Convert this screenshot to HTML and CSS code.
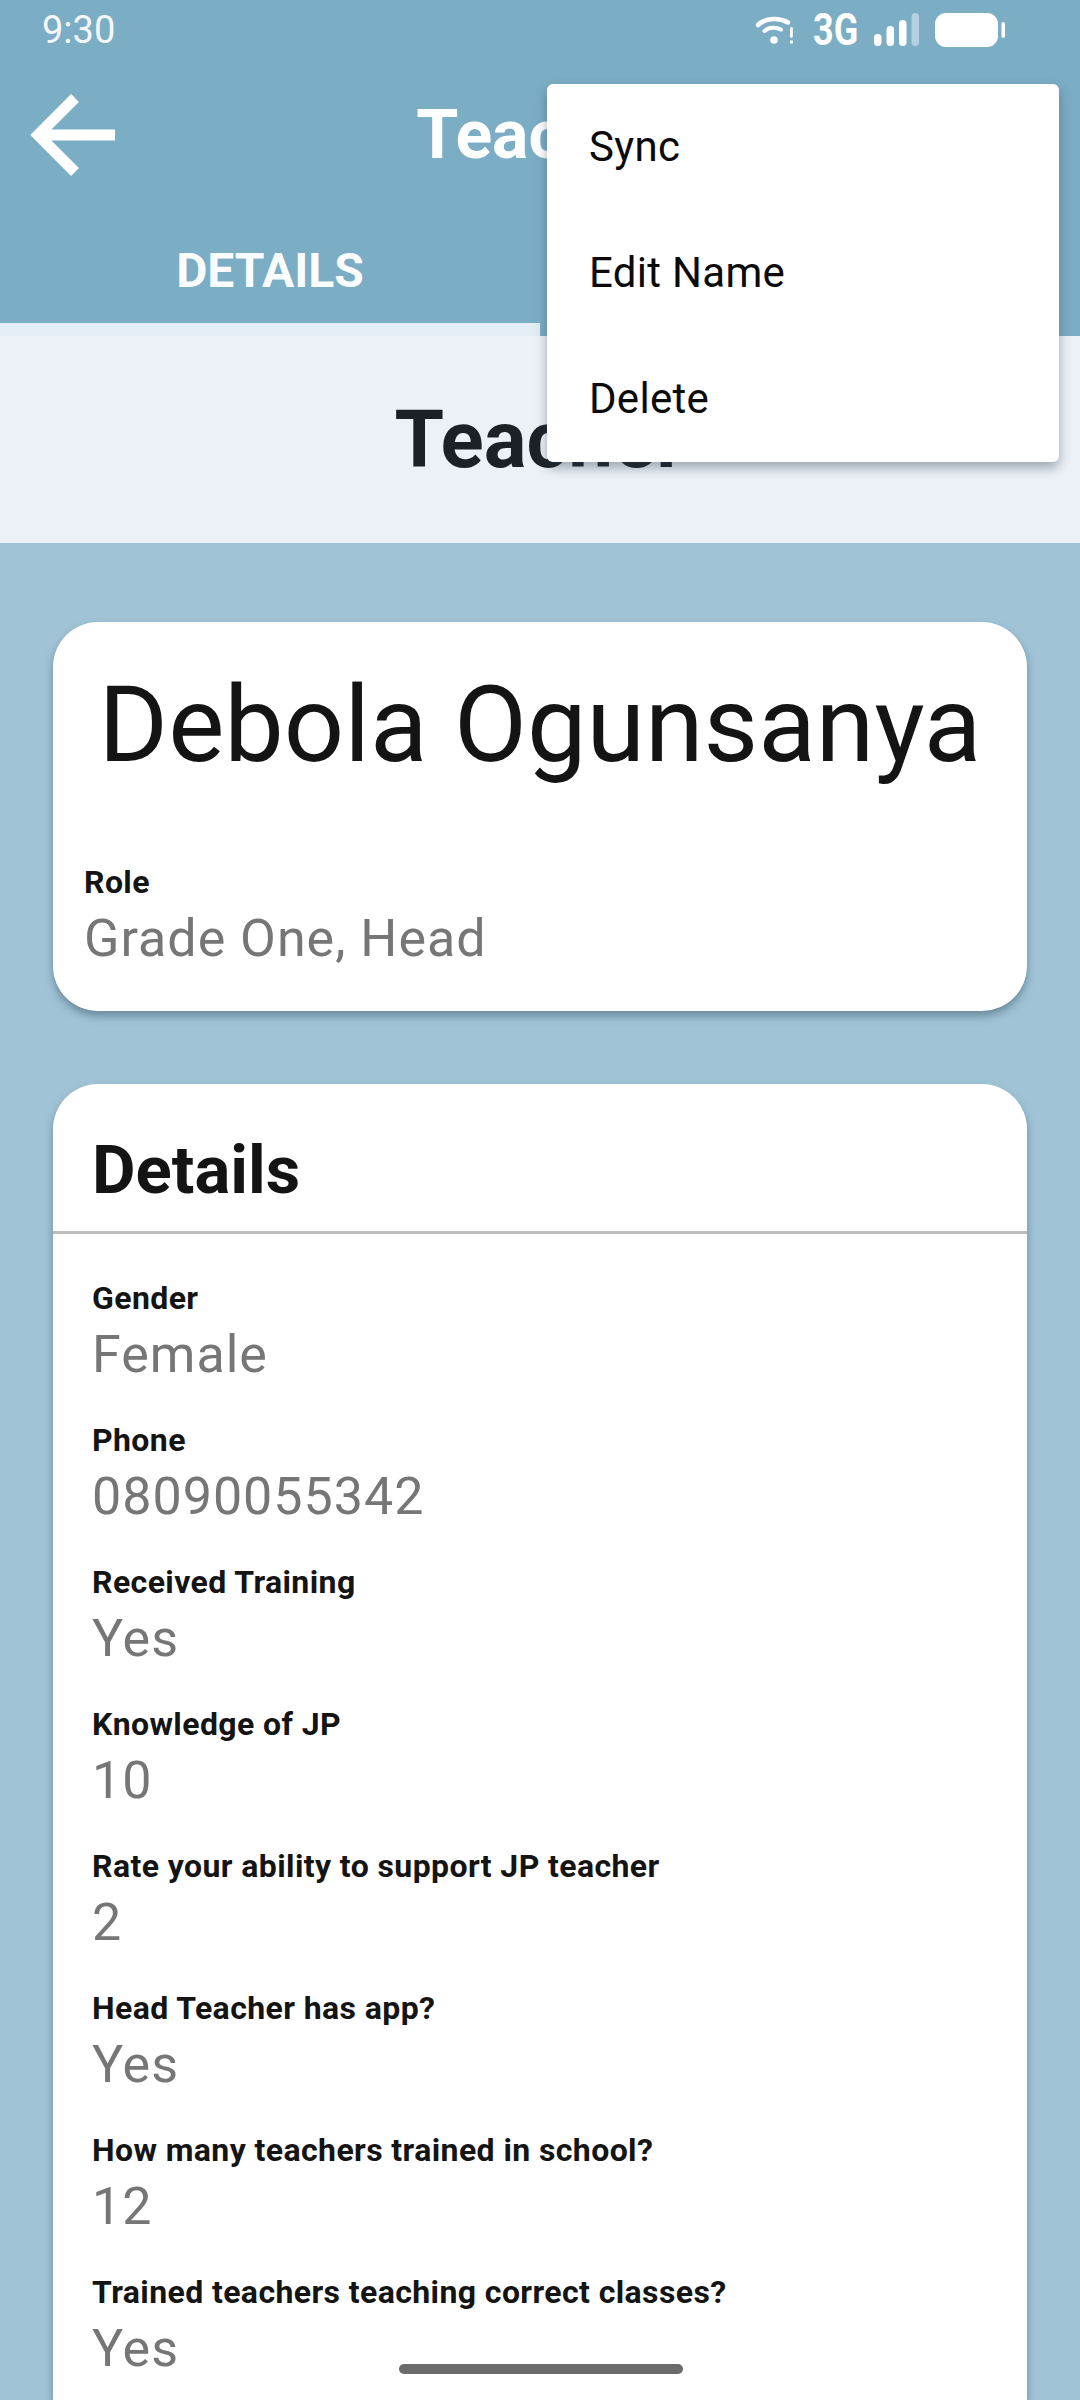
FILE: index.html
```html
<!DOCTYPE html>
<html lang="en">
<head>
<meta charset="utf-8">
<title>Teacher</title>
<link rel="stylesheet" href="styles.css">
</head>
<body>
<div class="screen">
  <header class="topbar">
    <div class="status">
      <span class="time">9:30</span>
      <div class="status-icons">
        <svg class="wifi" width="38" height="30" viewBox="0 0 38 30"><path d="M3 10C11 2.500 24 2.500 33 7.500" fill="none" stroke="#fff" stroke-width="4.500" stroke-linecap="round"/><path d="M9.500 16C14 12 21 12 26 14.500" fill="none" stroke="#fff" stroke-width="4" stroke-linecap="round"/><circle cx="19" cy="25" r="3.800" fill="#fff"/><rect x="35" y="12" width="2.800" height="11" rx="1.400" fill="#fff"/><rect x="35" y="25.500" width="2.800" height="3" fill="#fff"/></svg>
        <span class="net">3G</span>
        <svg class="signal" width="45" height="34" viewBox="0 0 45 34"><rect x="0" y="21" width="7.500" height="12" rx="3.700" fill="#fff"/><rect x="12.500" y="13" width="7.500" height="20" rx="3.700" fill="#fff"/><rect x="25" y="7" width="7.500" height="26" rx="3.700" fill="#fff"/><rect x="37.500" y="0" width="7.500" height="33" rx="3.700" fill="#b4d0df"/></svg>
        <svg class="battery" width="70" height="34" viewBox="0 0 70 34"><rect x="0" y="0" width="63" height="34" rx="11" fill="#fff"/><rect x="66.500" y="9" width="3.500" height="16" rx="1.700" fill="#fff"/></svg>
      </div>
    </div>
    <div class="appbar">
      <svg class="back" width="90" height="90" viewBox="0 0 90 90"><path d="M89 45H12M49 8L12 45L49 82" fill="none" stroke="#fff" stroke-width="11" stroke-linejoin="miter"/></svg>
      <h1 class="appbar-title">Teacher</h1>
    </div>
    <nav class="tabs">
      <div class="tab tab-active">DETAILS</div>
      <div class="tab"></div>
    </nav>
  </header>
  <section class="page-head"><h2 class="page-title">Teacher</h2></section>
  <main class="content">
    <section class="card card-name">
      <div class="name">Debola Ogunsanya</div>
      <div class="field-label">Role</div>
      <div class="field-value">Grade One, Head</div>
    </section>
    <section class="card card-details">
      <h3 class="details-title">Details</h3>
      <div class="fields">
        <div class="field"><div class="field-label">Gender</div><div class="field-value">Female</div></div>
        <div class="field"><div class="field-label">Phone</div><div class="field-value">08090055342</div></div>
        <div class="field"><div class="field-label">Received Training</div><div class="field-value">Yes</div></div>
        <div class="field"><div class="field-label">Knowledge of JP</div><div class="field-value">10</div></div>
        <div class="field"><div class="field-label">Rate your ability to support JP teacher</div><div class="field-value">2</div></div>
        <div class="field"><div class="field-label">Head Teacher has app?</div><div class="field-value">Yes</div></div>
        <div class="field"><div class="field-label">How many teachers trained in school?</div><div class="field-value">12</div></div>
        <div class="field"><div class="field-label">Trained teachers teaching correct classes?</div><div class="field-value">Yes</div></div>
      </div>
    </section>
  </main>
  <div class="menu">
    <div class="menu-item">Sync</div>
    <div class="menu-item">Edit Name</div>
    <div class="menu-item">Delete</div>
  </div>
  <div class="home-bar"></div>
</div>
</body>
</html>
```
FILE: styles.css
```css
* { box-sizing: border-box; }
html, body { margin: 0; padding: 0; }
body { font-family: Roboto, "Liberation Sans", sans-serif; background: #a0c4d6; }
h1, h2, h3 { margin: 0; }
.screen { position: relative; width: 1080px; height: 2400px; overflow: hidden; background: #a0c4d6; display: flex; flex-direction: column; }
.topbar { background: #7badc5; height: 336px; flex: none; }
.status { height: 60px; display: flex; justify-content: space-between; align-items: center; padding: 0 75px 0 42px; color: #fff; }
.time { font-size: 38px; font-weight: 400; color: #f4f8fa; }
.status-icons { display: flex; align-items: center; }
.wifi { margin-right: 20px; }
.net { width: 45px; font-size: 45px; line-height: 34px; font-weight: 700; margin-right: 16px; transform: scaleX(.8); transform-origin: left center; }
.signal { margin-right: 16px; }
.appbar { height: 150px; position: relative; display: flex; align-items: center; justify-content: center; }
.back { position: absolute; left: 26px; top: 30px; }
.appbar-title { font-size: 68px; font-weight: 700; color: #fff; line-height: 1; }
.tabs { display: flex; height: 126px; }
.tab { flex: 1; position: relative; display: flex; align-items: flex-start; justify-content: center; padding-top: 32px; font-size: 48px; font-weight: 700; color: #fafcfd; }
.tab-active::after { content: ""; position: absolute; left: 0; right: 0; bottom: 0; height: 13px; background: #e3edf3; }
.page-head { height: 207px; flex: none; background: #ebf1f7; display: flex; align-items: center; justify-content: center; }
.page-title { font-size: 80px; font-weight: 700; color: #1c2125; }
.content { flex: 1; padding: 79px 53px 0; display: flex; flex-direction: column; gap: 73px; }
.card { background: #fff; border-radius: 45px; box-shadow: 0 5px 8px rgba(60, 90, 110, .55); }
.card-name { height: 389px; padding: 42px 31px 0; flex: none; }
.name { font-size: 106px; line-height: 122px; color: #141414; text-align: center; margin-bottom: 77px; white-space: nowrap; }
.field-label { font-size: 32px; font-weight: 700; color: #141414; line-height: 38px; letter-spacing: .4px; }
.field-value { font-size: 52px; color: #767676; line-height: 76px; letter-spacing: 1px; }
.card-details { flex: 1; border-radius: 45px 45px 0 0; }
.details-title { height: 150px; border-bottom: 3px solid #bdbdbd; padding: 50px 39px 0; font-size: 67px; line-height: 72px; font-weight: 700; color: #141414; }
.fields { padding: 45px 39px 0; display: flex; flex-direction: column; gap: 28px; }
.menu { position: absolute; left: 547px; top: 84px; width: 512px; height: 378px; background: #fff; border-radius: 6px; box-shadow: 0 6px 12px rgba(40, 60, 75, .4); }
.menu-item { height: 126px; display: flex; align-items: center; padding: 0 0 2px 42px; font-size: 42px; letter-spacing: .3px; color: #0a0a0a; }
.home-bar { position: absolute; left: 399px; top: 2364px; width: 284px; height: 10px; border-radius: 5px; background: #6b6b6b; }
```
